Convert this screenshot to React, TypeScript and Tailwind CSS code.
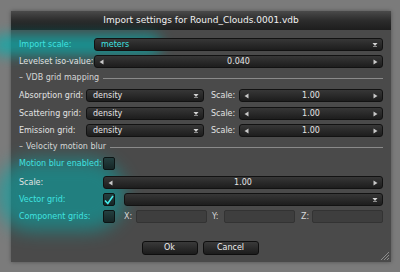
import React from 'react'

const font = { fontFamily: '"DejaVu Sans", "Liberation Sans", sans-serif' }

function LeftArrow() {
  return (
    <svg width="5" height="6" viewBox="0 0 5 6" className="shrink-0">
      <path d="M4.5 0.5 L0.5 3 L4.5 5.5 Z" fill="#c8c8c8" />
    </svg>
  )
}

function RightArrow() {
  return (
    <svg width="5" height="6" viewBox="0 0 5 6" className="shrink-0">
      <path d="M0.5 0.5 L4.5 3 L0.5 5.5 Z" fill="#c8c8c8" />
    </svg>
  )
}

function DownArrow() {
  return (
    <svg width="6" height="5" viewBox="0 0 6 5" className="shrink-0">
      <path d="M0.5 1 L5.5 1 L3 4 Z" fill="#d4d4d4" />
      <rect x="1" y="4" width="4" height="1" fill="#8a8a8a" />
    </svg>
  )
}

function Dropdown({ value, className = '', glow = false }: { value?: string; className?: string; glow?: boolean }) {
  return (
    <div
      className={`h-[13px] flex items-center justify-between pl-[6px] pr-[4px] rounded-[3px] border border-[#121212] bg-gradient-to-b from-[#373737] to-[#1d1d1d] ${className}`}
    >
      <span className={`text-[8px] leading-none ${glow ? 'text-[#3fe3e0]' : 'text-[#e4e4e4]'}`}>{value}</span>
      <DownArrow />
    </div>
  )
}

function Slider({ value, className = '' }: { value: string; className?: string }) {
  return (
    <div
      className={`h-[13px] flex items-center justify-between px-[4px] rounded-[3px] border border-[#121212] bg-gradient-to-b from-[#373737] to-[#1d1d1d] ${className}`}
    >
      <LeftArrow />
      <span className="text-[8px] leading-none text-[#e4e4e4]">{value}</span>
      <RightArrow />
    </div>
  )
}

function Checkbox({ checked = false }: { checked?: boolean }) {
  return (
    <div className="w-[12px] h-[13px] shrink-0 rounded-[2px] border border-[#0c1414] bg-gradient-to-b from-[#244040] to-[#162626] flex items-center justify-center">
      {checked && (
        <svg width="10" height="10" viewBox="0 0 10 10">
          <path d="M1 5.5 L3.8 8.5 L9 1" stroke="#45ecea" strokeWidth="1.6" fill="none" />
        </svg>
      )}
    </div>
  )
}

function Section({ title }: { title: string }) {
  return (
    <div className="flex items-center h-[12px] gap-[3px] text-[8px] text-[#d6d6d6]">
      <span>–</span>
      <span>{title}</span>
      <div className="flex-1 h-px bg-[#8a8a8a] ml-[1px]" />
    </div>
  )
}

export default function App() {
  return (
    <div className="relative w-[400px] h-[272px] bg-[#7b7b7b] overflow-hidden pl-[11px] pt-[11px]" style={font}>
      <div className="relative w-[380px] h-[251px] bg-[#4a4a4a] shadow-[0_0_4px_rgba(0,0,0,0.35)] flex flex-col">
        {/* title bar */}
        <div className="h-[19px] bg-gradient-to-b from-[#4a4a4a] via-[#2c2c2c] to-[#1d1d1d] flex items-center justify-center">
          <span className="text-[9px] text-[#f2f2f2] leading-none">Import settings for Round_Clouds.0001.vdb</span>
        </div>

        {/* glow highlights */}
        <div className="absolute left-[-20px] top-[24px] w-[170px] h-[20px] rounded-full bg-[#00b4b4] opacity-70 blur-[7px]" />
        <div className="absolute left-[-16px] top-[148px] w-[130px] h-[72px] rounded-full bg-[#00acac] opacity-55 blur-[9px]" />

        <div className="relative flex flex-col px-[8px] pt-[8px]">
          <div className="flex items-center h-[13px]">
            <span className="w-[75px] text-[8px] text-[#3fe3e0]">Import scale:</span>
            <Dropdown value="meters" glow className="flex-1" />
          </div>
          <div className="flex items-center h-[13px] mt-[4px]">
            <span className="w-[75px] text-[8px] text-[#e2e2e2]">Levelset iso-value:</span>
            <Slider value="0.040" className="flex-1" />
          </div>

          <div className="mt-[4px]">
            <Section title="VDB grid mapping" />
          </div>

          {[
            { label: 'Absorption grid:', mt: 'mt-[5px]' },
            { label: 'Scattering grid:', mt: 'mt-[5px]' },
            { label: 'Emission grid:', mt: 'mt-[4px]' },
          ].map(row => (
            <div key={row.label} className={`flex items-center h-[13px] ${row.mt}`}>
              <span className="w-[67px] text-[8px] text-[#e2e2e2]">{row.label}</span>
              <Dropdown value="density" className="w-[118px]" />
              <span className="ml-[7px] w-[28px] text-[8px] text-[#e2e2e2]">Scale:</span>
              <Slider value="1.00" className="flex-1" />
            </div>
          ))}

          <div className="mt-[4px]">
            <Section title="Velocity motion blur" />
          </div>

          <div className="flex items-center h-[13px] mt-[4px]">
            <span className="w-[84px] text-[8px] text-[#3fe3e0]">Motion blur enabled:</span>
            <Checkbox />
          </div>
          <div className="flex items-center h-[13px] mt-[6px]">
            <span className="w-[84px] text-[8px] text-[#e2e2e2]">Scale:</span>
            <Slider value="1.00" className="flex-1" />
          </div>
          <div className="flex items-center h-[13px] mt-[4px]">
            <span className="w-[84px] text-[8px] text-[#3fe3e0]">Vector grid:</span>
            <Checkbox checked />
            <Dropdown className="flex-1 ml-[9px]" />
          </div>
          <div className="flex items-center h-[13px] mt-[4px] text-[8px]">
            <span className="w-[84px] text-[#3fe3e0]">Component grids:</span>
            <Checkbox />
            <span className="ml-[9px] w-[12px] text-[#d8d8d8]">X:</span>
            <div className="w-[71px] h-[13px] rounded-[2px] border border-[#333] bg-[#3e3e3e]" />
            <span className="ml-[5px] w-[12px] text-[#d8d8d8]">Y:</span>
            <div className="w-[71px] h-[13px] rounded-[2px] border border-[#333] bg-[#3e3e3e]" />
            <span className="ml-[6px] w-[11px] text-[#d8d8d8]">Z:</span>
            <div className="flex-1 h-[13px] rounded-[2px] border border-[#333] bg-[#3e3e3e]" />
          </div>

          <div className="flex justify-center gap-[5px] mt-[18px] pr-[2px]">
            {['Ok', 'Cancel'].map(b => (
              <button
                key={b}
                className="w-[56px] h-[14px] rounded-[3px] border border-[#0e0e0e] bg-gradient-to-b from-[#3a3a3a] to-[#1c1c1c] text-[8px] text-[#f0f0f0] leading-none"
              >
                {b}
              </button>
            ))}
          </div>
        </div>

        {/* resize grip */}
        <svg className="absolute right-[1px] bottom-[1px]" width="12" height="12" viewBox="0 0 12 12">
          <path d="M11 3 L3 11 M11 6 L6 11 M11 9 L9 11" stroke="#8d8d8d" strokeWidth="1" />
        </svg>
      </div>
    </div>
  )
}
